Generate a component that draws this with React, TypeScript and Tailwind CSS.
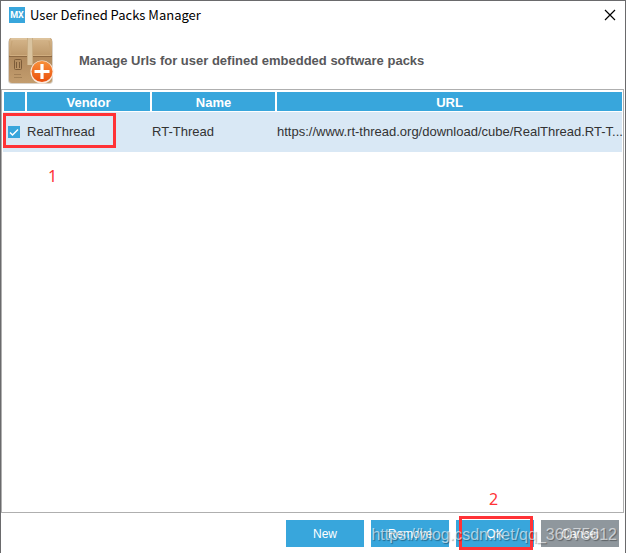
import { useState } from 'react'
import { clsx } from 'clsx'

const packs = [
  {
    vendor: 'RealThread',
    name: 'RT-Thread',
    url: 'https://www.rt-thread.org/download/cube/RealThread.RT-T...',
  },
]

const actions = [
  { label: 'New' },
  { label: 'Remove' },
  { label: 'OK', marked: true },
  { label: 'Cancel', muted: true },
]

function PackageIcon() {
  return (
    <svg className="h-12 w-12" viewBox="0 0 48 48" aria-hidden="true">
      <defs>
        <linearGradient id="lid" x1="0" y1="0" x2="0" y2="1">
          <stop offset="0" stopColor="#d5b68b" />
          <stop offset="1" stopColor="#bd986a" />
        </linearGradient>
        <linearGradient id="front" x1="0" y1="0" x2="0" y2="1">
          <stop offset="0" stopColor="#a27b51" />
          <stop offset="1" stopColor="#c39d6e" />
        </linearGradient>
        <linearGradient id="badge" x1="0" y1="0" x2="0" y2="1">
          <stop offset="0" stopColor="#f8913c" />
          <stop offset="1" stopColor="#ea4f0c" />
        </linearGradient>
      </defs>
      <rect x="1" y="2" width="45" height="45" rx="4" fill="#d8d2ca" />
      <rect x="2" y="1" width="43" height="45" rx="3" fill="url(#front)" />
      <path d="M5 1h37q3 0 3 3v15H2V4q0-3 3-3z" fill="url(#lid)" />
      <path d="M4 2h39" stroke="#e6d0ae" />
      <path d="M5 4 3 18M42 4l2 14" stroke="#c7a476" />
      <path d="M3 18.5h41" stroke="#d0ad7f" />
      <path d="M2 19.5h43" stroke="#8c6842" />
      <path d="M20 1h6v27h-6z" fill="#d9c39f" />
      <path d="M20.500 1v27M25.500 1v27" stroke="#c9ad83" />
      <g fill="none" stroke="#7d5c39">
        <rect x="7.500" y="22.500" width="7" height="10" rx="1" />
        <path d="M9.500 25v6M12.500 25v6" />
        <path d="M7 37.500h7M7 40.500h8" strokeOpacity=".4" />
      </g>
      <circle cx="35" cy="35" r="11.500" fill="#fbe9dc" />
      <circle cx="35" cy="34.500" r="10.500" fill="url(#badge)" />
      <path d="M35 27v15M27.500 34.500h15" stroke="#fff" strokeWidth="3.200" />
    </svg>
  )
}

export default function App() {
  const [checked, setChecked] = useState(true)

  return (
    <div className="relative flex min-h-screen flex-col border-x border-t border-[#6a6a6c] bg-white font-['Liberation_Sans',Arial,sans-serif] text-[#333]">
      {/* Title bar */}
      <header className="flex h-7 items-center pl-2">
        <span className="flex h-4 w-4 items-center justify-center bg-[#38a6dc] font-['Roboto',sans-serif] text-[9px] leading-4 font-bold text-white">
          MX
        </span>
        <h1 className="ml-[5px] font-['Noto_Sans_CJK_SC',sans-serif] text-[13px] text-black">User Defined Packs Manager</h1>
        <button type="button" aria-label="Close" className="mr-[9px] ml-auto">
          <svg className="h-3 w-3" viewBox="0 0 12 12" stroke="#000" strokeWidth="1.200">
            <path d="m1 1 10 10M11 1 1 11" />
          </svg>
        </button>
      </header>

      {/* Banner */}
      <div className="flex h-[60px] items-center gap-6 pt-1 pl-[6px]">
        <PackageIcon />
        <h2 className="text-[13px] font-bold text-[#58585a]">Manage Urls for user defined embedded software packs</h2>
      </div>

      {/* Pack list */}
      <main className="mr-px flex-1 border border-[#afafaf] px-px pt-[2px]">
        <table className="w-full table-fixed border-separate border-spacing-0">
          <colgroup>
            <col className="w-6" />
            <col className="w-[125px]" />
            <col className="w-[125px]" />
            <col />
          </colgroup>
          <thead>
            <tr className="h-5 text-[13px] leading-4 text-white">
              {['', 'Vendor', 'Name', 'URL'].map((title, i) => (
                <th
                  key={title}
                  aria-label={i === 0 ? 'Selected' : undefined}
                  className={clsx(
                    'border-b border-white bg-[#38a6dc] p-0 pt-[3px] font-bold',
                    i === 0 && 'border-l',
                    i < 3 && 'border-r-2',
                  )}
                >
                  {title}
                </th>
              ))}
            </tr>
          </thead>
          <tbody>
            {packs.map((pack) => (
              <tr key={pack.name} className="h-10 bg-[#d9e8f5] text-[13px]">
                <td className="relative p-0">
                  <label className="relative ml-[5px] flex h-3 w-3">
                    <input
                      type="checkbox"
                      aria-label={pack.vendor}
                      checked={checked}
                      onChange={() => setChecked(!checked)}
                      className="h-3 w-3 appearance-none border border-[#38a6dc] bg-white checked:bg-[#38a6dc]"
                    />
                    {checked && (
                      <svg className="pointer-events-none absolute inset-0" viewBox="0 0 12 12" fill="none" stroke="#fff" strokeWidth="1.500">
                        <path d="m2 6.500 2.500 2.500L10 3.500" />
                      </svg>
                    )}
                  </label>
                  <span className="pointer-events-none absolute top-px left-0 z-10 h-[35px] w-[113px] border-3 border-[#ff3236]" />
                  <span className="absolute top-[54px] left-[45px] font-['Noto_Sans',sans-serif] text-[16px] leading-5 text-[#ff3236]">
                    1
                  </span>
                </td>
                <td className="p-0">{pack.vendor}</td>
                <td className="p-0">{pack.name}</td>
                <td className="p-0 whitespace-nowrap">{pack.url}</td>
              </tr>
            ))}
          </tbody>
        </table>
      </main>

      {/* Actions */}
      <footer className="flex justify-end gap-[7px] pt-[7px] pr-[6px] pb-[6px]">
        {actions.map(({ label, marked, muted }) => (
          <div key={label} className="relative">
            <button
              type="button"
              className={clsx('block h-[27px] w-[78px] text-[12px] text-white', muted ? 'bg-[#8f979d]' : 'bg-[#38a6dc]')}
            >
              {label}
            </button>
            {marked && (
              <>
                <span className="pointer-events-none absolute -top-1 left-[3px] h-[34px] w-[74px] border-3 border-[#ff3236]" />
                <span className="absolute -top-[31px] left-[33px] font-['Noto_Sans',sans-serif] text-[16px] leading-5 text-[#ff3236]">
                  2
                </span>
              </>
            )}
          </div>
        ))}
      </footer>

      {/* Watermark */}
      <p className="pointer-events-none absolute right-2 bottom-2 z-20 text-[16px] leading-5 whitespace-nowrap text-white/60 text-shadow-[1px_1px_1px_rgb(0_0_0/0.35)]">
        https://blog.csdn.net/qq_36075612
      </p>
    </div>
  )
}
